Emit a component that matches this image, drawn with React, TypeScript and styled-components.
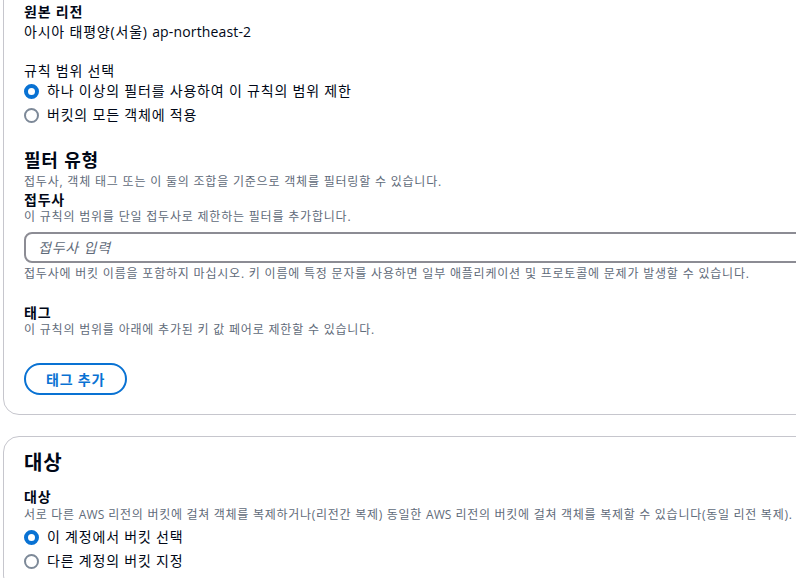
import styled, { createGlobalStyle } from "styled-components";

const GlobalStyle = createGlobalStyle`
  html, body {
    margin: 0;
    padding: 0;
    background: #ffffff;
    overflow: hidden;
  }
  body {
    font-family: "Open Sans", "Noto Sans CJK KR", sans-serif;
    color: #000716;
    letter-spacing: 0.8px;
  }
`;

const Page = styled.div`
  padding-left: 3px;
  width: 900px;
  display: flex;
  flex-direction: column;
  gap: 21px;
`;

const Card = styled.section<{ $clipTop?: boolean }>`
  border: 1px solid #c6c6cd;
  border-radius: 16px;
  background: #fff;
  padding: ${({ $clipTop }) => ($clipTop ? "20px 20px 19px" : "12px 20px 20px")};
  margin-top: ${({ $clipTop }) => ($clipTop ? "-19px" : "0")};
  display: flex;
  flex-direction: column;
`;

const Label = styled.div<{ $lh?: number }>`
  font-size: 14px;
  font-weight: 700;
  line-height: ${({ $lh }) => $lh ?? 20}px;
`;

const Value = styled.div`
  font-size: 14px;
  line-height: 20px;
`;

const Latin = styled.span`
  letter-spacing: 0.15px;
`;

const Heading = styled.h2<{ $size: number; $lh: number }>`
  margin: 0;
  font-size: ${({ $size }) => $size}px;
  line-height: ${({ $lh }) => $lh}px;
  font-weight: 700;
`;

const Desc = styled.div<{ $mt?: number; $tight?: boolean }>`
  font-size: 12px;
  line-height: 16px;
  color: #5f6b7a;
  white-space: nowrap;
  letter-spacing: ${({ $tight }) => ($tight ? "0.72px" : "0.8px")};
  margin-top: ${({ $mt }) => $mt ?? 0}px;
`;

const Field = styled.div<{ $mt?: number }>`
  display: flex;
  flex-direction: column;
  margin-top: ${({ $mt }) => $mt ?? 0}px;
`;

const RadioGroup = styled.div<{ $mt?: number }>`
  display: flex;
  flex-direction: column;
  gap: 4px;
  margin-top: ${({ $mt }) => $mt ?? 0}px;
`;

const RadioRow = styled.label`
  display: flex;
  align-items: center;
  gap: 8px;
  font-size: 14px;
  line-height: 20px;
`;

const RadioDot = styled.span<{ $checked?: boolean }>`
  width: 15px;
  height: 15px;
  box-sizing: border-box;
  border-radius: 50%;
  flex-shrink: 0;
  border: ${({ $checked }) =>
    $checked ? "4.5px solid #0972d3" : "2px solid #7d8998"};
  background: #fff;
`;

const Input = styled.input`
  box-sizing: border-box;
  width: 100%;
  height: 31px;
  margin-top: 7px;
  border: 2px solid #8c8c94;
  border-radius: 8px;
  padding: 0 12px;
  font-family: inherit;
  font-size: 14px;
  letter-spacing: inherit;
  outline: none;
  &::placeholder {
    color: #5f6b7a;
    font-style: italic;
  }
`;

const Button = styled.button`
  align-self: flex-start;
  margin-top: 25px;
  height: 32px;
  box-sizing: border-box;
  padding: 0 20px;
  border: 2px solid #0972d3;
  border-radius: 20px;
  background: #fff;
  color: #0972d3;
  font-family: inherit;
  font-size: 14px;
  font-weight: 700;
  letter-spacing: inherit;
`;

const Radio = ({ checked, children }: { checked?: boolean; children: string }) => (
  <RadioRow>
    <RadioDot $checked={checked} />
    {children}
  </RadioRow>
);

export default function App() {
  return (
    <>
      <GlobalStyle />
      <Page>
        <Card $clipTop>
          <Field>
            <Label>원본 리전</Label>
            <Value>
              아시아 태평양(서울) <Latin>ap-northeast-2</Latin>
            </Value>
          </Field>

          <Field $mt={19}>
            <Value>규칙 범위 선택</Value>
            <RadioGroup>
              <Radio checked>하나 이상의 필터를 사용하여 이 규칙의 범위 제한</Radio>
              <Radio>버킷의 모든 객체에 적용</Radio>
            </RadioGroup>
          </Field>

          <Field $mt={23}>
            <Heading $size={18} $lh={24}>
              필터 유형
            </Heading>
            <Desc $mt={2}>
              접두사, 객체 태그 또는 이 둘의 조합을 기준으로 객체를 필터링할 수 있습니다.
            </Desc>
          </Field>

          <Field $mt={1}>
            <Label $lh={18}>접두사</Label>
            <Desc>이 규칙의 범위를 단일 접두사로 제한하는 필터를 추가합니다.</Desc>
            <Input placeholder="접두사 입력" />
            <Desc $mt={3}>
              접두사에 버킷 이름을 포함하지 마십시오. 키 이름에 특정 문자를 사용하면 일부
              애플리케이션 및 프로토콜에 문제가 발생할 수 있습니다.
            </Desc>
          </Field>

          <Field $mt={22}>
            <Label $lh={18}>태그</Label>
            <Desc>이 규칙의 범위를 아래에 추가된 키 값 페어로 제한할 수 있습니다.</Desc>
            <Button>태그 추가</Button>
          </Field>
        </Card>

        <Card>
          <Heading $size={20} $lh={28}>
            대상
          </Heading>
          <Field $mt={10}>
            <Label>대상</Label>
            <Desc $tight>
              서로 다른 <Latin>AWS</Latin> 리전의 버킷에 걸쳐 객체를 복제하거나(리전간 복제)
              동일한 <Latin>AWS</Latin> 리전의 버킷에 걸쳐 객체를 복제할 수 있습니다(동일
              리전 복제).
            </Desc>
            <RadioGroup $mt={4}>
              <Radio checked>이 계정에서 버킷 선택</Radio>
              <Radio>다른 계정의 버킷 지정</Radio>
            </RadioGroup>
          </Field>
        </Card>
      </Page>
    </>
  );
}
